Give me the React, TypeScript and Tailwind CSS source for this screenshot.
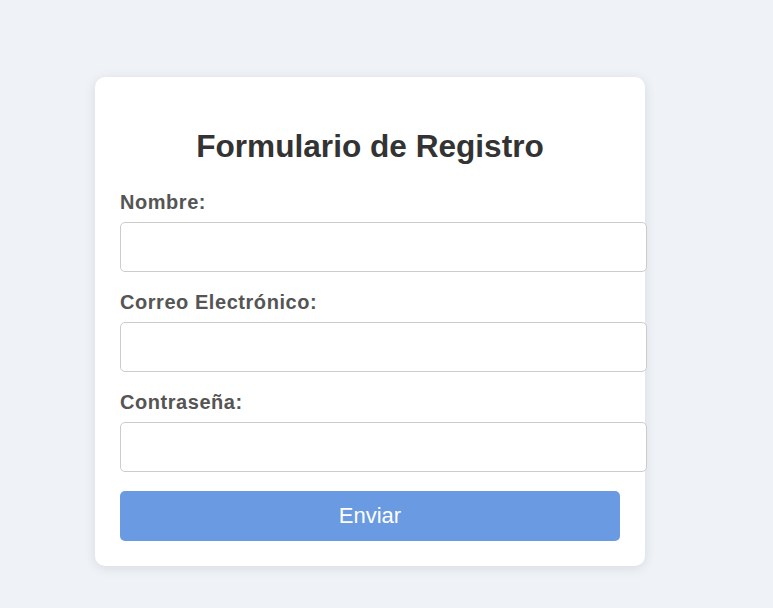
import React from 'react';

const fields = [
  { id: 'nombre', label: 'Nombre:', type: 'text' },
  { id: 'correo', label: 'Correo Electrónico:', type: 'email' },
  { id: 'password', label: 'Contraseña:', type: 'password' },
];

const App: React.FC = () => {
  return (
    <div
      className="min-h-screen bg-[#eff2f7] pt-[77px] pl-[95px]"
      style={{ fontFamily: '"Liberation Sans", Arial, sans-serif' }}
    >
      <form
        className="w-[550px] bg-white rounded-[10px] px-[25px] pt-[25px] pb-[25px] shadow-[0_2px_12px_rgba(0,0,0,0.1)]"
        onSubmit={(e) => e.preventDefault()}
      >
        <h2 className="mt-[26px] mb-[26px] text-center text-[31.6px] leading-[37px] font-bold text-[#333333]">
          Formulario de Registro
        </h2>

        {fields.map((f) => (
          <div key={f.id} className="mb-[19px]">
            <label
              htmlFor={f.id}
              className="block mb-[8px] text-[20px] leading-[23px] font-bold tracking-[0.55px] text-[#555555]"
            >
              {f.label}
            </label>
            <input
              id={f.id}
              type={f.type}
              className="block w-full box-content h-[24px] px-[12.5px] py-[12px] border border-[#cccccc] rounded-[5px] bg-white text-[20px] outline-none"
            />
          </div>
        ))}

        <button
          type="submit"
          className="block w-full h-[50px] rounded-[5px] bg-[#6a9ae2] text-white text-[22px] leading-[24px] pb-[1px]"
        >
          Enviar
        </button>
      </form>
    </div>
  );
};

export default App;
